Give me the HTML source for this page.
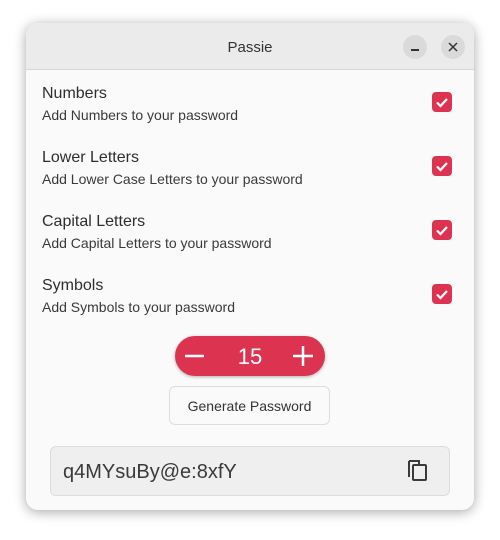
<!DOCTYPE html>
<html><head><style>
body{margin:0;width:500px;height:540px;background:#fff;font-family:"Liberation Sans",sans-serif;position:relative;overflow:hidden}
.win{position:absolute;left:26px;top:23px;width:448px;height:487px;border-radius:12px;background:#fafafa;box-shadow:0 2px 12px rgba(0,0,0,.35);overflow:hidden}
.hdr{height:46px;background:#ebebeb;border-bottom:1px solid #d6d6d6;position:relative;text-align:center;line-height:49px;font-size:15px;color:#333}
.wb{position:absolute;top:12px;width:24px;height:24px;border-radius:12px;background:#dadada}
.row{position:absolute;left:16px;width:416px}
.t{font-size:16px;color:#2e2e2e;height:22px}
.s{font-size:14px;color:#3a3a3a;margin-top:0px}
.cb{position:absolute;left:390px;top:7px;width:20px;height:20px;border-radius:4px;background:#dc3351}
.step{position:absolute;left:149px;top:313px;width:150px;height:40px;border-radius:20px;background:#dc3351;box-shadow:0 1px 3px rgba(0,0,0,.3);color:#fff}
.gen{position:absolute;left:143px;top:363px;width:159px;height:37px;border:1px solid #ddd;border-radius:6px;background:#fafafa;text-align:center;line-height:39px;font-size:14px;color:#333}
.pw{position:absolute;left:24px;top:423px;width:398px;height:48px;border:1px solid #dcdcdc;border-radius:6px;background:#efefef;font-size:20px;color:#3a3a3a;line-height:50px;text-indent:12px}
</style></head><body>
<div class="win">
<div class="hdr">Passie
<div class="wb" style="left:377px"><div style="position:absolute;left:8px;top:14px;width:8px;height:1.5px;background:#333"></div></div>
<div class="wb" style="left:415px"><svg width="24" height="24" style="position:absolute;left:0;top:0"><path d="M8 8L16 16M16 8L8 16" stroke="#333" stroke-width="1.5"/></svg></div>
</div>
<div class="row" style="top:62px"><div class="t">Numbers</div><div class="s">Add Numbers to your password</div><div class="cb"><svg width="20" height="20"><path d="M5 10.5L8.5 14L15 7" stroke="#fff" stroke-width="2.2" fill="none"/></svg></div></div>
<div class="row" style="top:126px"><div class="t">Lower Letters</div><div class="s">Add Lower Case Letters to your password</div><div class="cb"><svg width="20" height="20"><path d="M5 10.5L8.5 14L15 7" stroke="#fff" stroke-width="2.2" fill="none"/></svg></div></div>
<div class="row" style="top:190px"><div class="t">Capital Letters</div><div class="s">Add Capital Letters to your password</div><div class="cb"><svg width="20" height="20"><path d="M5 10.5L8.5 14L15 7" stroke="#fff" stroke-width="2.2" fill="none"/></svg></div></div>
<div class="row" style="top:254px"><div class="t">Symbols</div><div class="s">Add Symbols to your password</div><div class="cb"><svg width="20" height="20"><path d="M5 10.5L8.5 14L15 7" stroke="#fff" stroke-width="2.2" fill="none"/></svg></div></div>
<div class="step"><svg width="150" height="40" style="position:absolute;left:0;top:0"><path d="M10 20H29M118 20H138M128 10V30" stroke="#fff" stroke-width="2.5"/></svg><div style="position:absolute;left:0;width:150px;text-align:center;top:8px;font-size:22px">15</div></div>
<div class="gen">Generate Password</div>
<div class="pw">q4MYsuBy@e:8xfY<svg width="20" height="22" style="position:absolute;left:357px;top:13px"><path d="M1 1H11V4" stroke="#3a3a3a" stroke-width="2" fill="none"/><path d="M1 1V17" stroke="#3a3a3a" stroke-width="2"/><rect x="5" y="5" width="13" height="15" rx="1" stroke="#3a3a3a" stroke-width="2" fill="none"/></svg></div>
</div>
</body></html>
